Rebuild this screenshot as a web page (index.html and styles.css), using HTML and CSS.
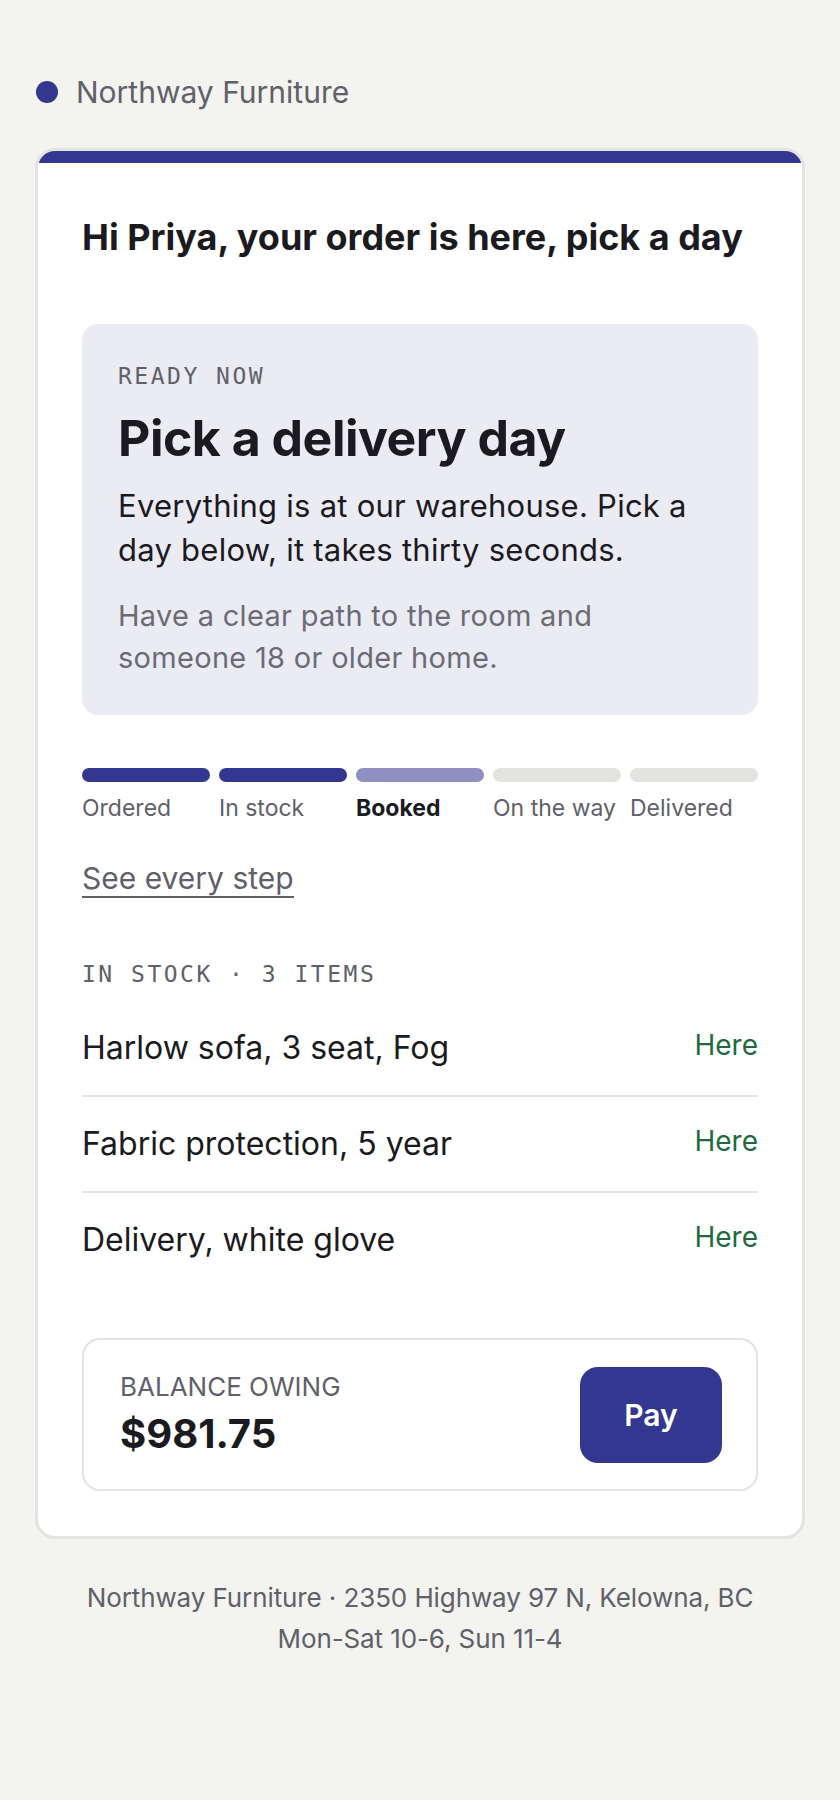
FILE: index.html
```html
<!DOCTYPE html>
<html lang="en">
<head>
    <meta charset="UTF-8">
    <meta name="viewport" content="width=device-width, initial-scale=1.0">
    <title>Northway Furniture - Your order</title>
    <link rel="stylesheet" href="styles.css">
</head>
<body>
    <header class="brand">
        <span class="brand-dot"></span>
        <span class="brand-name">Northway Furniture</span>
    </header>

    <main class="card">
        <div class="card-stripe"></div>
        <div class="card-body">
            <h1>Hi Priya, your order is here, pick a day</h1>

            <section class="ready">
                <p class="eyebrow">READY NOW</p>
                <h2>Pick a delivery day</h2>
                <p class="ready-text">Everything is at our warehouse. Pick a day below, it takes thirty seconds.</p>
                <p class="ready-note">Have a clear path to the room and someone 18 or older home.</p>
            </section>

            <ol class="steps">
                <li class="step done"><span class="bar"></span><span class="label">Ordered</span></li>
                <li class="step done"><span class="bar"></span><span class="label">In stock</span></li>
                <li class="step current"><span class="bar"></span><span class="label">Booked</span></li>
                <li class="step"><span class="bar"></span><span class="label">On the way</span></li>
                <li class="step"><span class="bar"></span><span class="label">Delivered</span></li>
            </ol>

            <a class="steps-link" href="#">See every step</a>

            <p class="eyebrow items-title">IN STOCK · 3 ITEMS</p>
            <ul class="items">
                <li class="item"><span class="item-name">Harlow sofa, 3 seat, Fog</span><span class="item-status">Here</span></li>
                <li class="item"><span class="item-name">Fabric protection, 5 year</span><span class="item-status">Here</span></li>
                <li class="item"><span class="item-name">Delivery, white glove</span><span class="item-status">Here</span></li>
            </ul>

            <div class="balance">
                <div class="balance-info">
                    <span class="balance-label">BALANCE OWING</span>
                    <span class="balance-amount">$981.75</span>
                </div>
                <button class="pay-btn">Pay</button>
            </div>
        </div>
    </main>

    <footer class="footer">
        <p>Northway Furniture · 2350 Highway 97 N, Kelowna, BC</p>
        <p>Mon-Sat 10-6, Sun 11-4</p>
    </footer>
</body>
</html>
```

FILE: styles.css
```css
body {
    margin: 0;
    padding: 72px 35px 80px;
    background-color: #f3f3ef;
    font-family: Inter, "Noto Sans", sans-serif;
    color: #1a1a1f;
}
p, h1, h2, ol, ul {
    margin: 0;
    padding: 0;
}

/* Brand row */
.brand {
    display: flex;
    align-items: center;
    gap: 18px;
    padding-left: 1px;
    height: 40px;
}
.brand-dot {
    width: 22px;
    height: 22px;
    border-radius: 50%;
    background-color: #34378f;
}
.brand-name {
    font-size: 30px;
    line-height: 40px;
    color: #5f606a;
}

/* Card */
.card {
    display: block;
    margin-top: 36px;
    background-color: #ffffff;
    border: 3px solid #e3e3df;
    border-radius: 20px;
    overflow: hidden;
}
.card-stripe {
    height: 12px;
    background-color: #34378f;
}
.card-body {
    padding: 52px 44px 45px;
}
h1 {
    font-size: 36px;
    line-height: 44px;
    font-weight: 700;
    white-space: nowrap;
}

/* Ready panel */
.ready {
    margin-top: 65px;
    padding: 38px 36px 36px;
    background-color: #ebebf4;
    border-radius: 16px;
}
.eyebrow {
    font-family: "DejaVu Sans Mono", "Liberation Mono", monospace;
    font-size: 23px;
    line-height: 28px;
    letter-spacing: 2.5px;
    color: #5f606a;
}
h2 {
    margin-top: 18px;
    font-size: 50px;
    line-height: 60px;
    font-weight: 700;
    letter-spacing: -0.01em;
}
.ready-text {
    margin-top: 16px;
    max-width: 596px;
    font-size: 31px;
    line-height: 44px;
    letter-spacing: 0.25px;
}
.ready-note {
    margin-top: 23px;
    max-width: 550px;
    font-size: 29px;
    line-height: 42px;
    letter-spacing: 0.3px;
    color: #6b6b76;
}

/* Progress steps */
.steps {
    list-style: none;
    margin-top: 53px;
    display: grid;
    grid-template-columns: repeat(5, 1fr);
    column-gap: 9px;
}
.step {
    display: flex;
    flex-direction: column;
    gap: 11px;
}
.bar {
    height: 14px;
    border-radius: 7px;
    background-color: #e3e3df;
}
.step.done .bar {
    background-color: #34378f;
}
.step.current .bar {
    background-color: #8f8fc1;
}
.label {
    font-size: 23px;
    line-height: 30px;
    color: #5f606a;
    white-space: nowrap;
}
.step.current .label {
    color: #1a1a1f;
    font-weight: 700;
}

.steps-link {
    display: inline-block;
    margin-top: 37px;
    font-size: 30px;
    line-height: 36px;
    color: #5f606a;
    text-decoration: none;
    border-bottom: 2px solid #5f606a;
}

/* Items */
.items-title {
    margin-top: 62px;
}
.items {
    list-style: none;
    margin-top: 13px;
}
.item {
    display: flex;
    justify-content: space-between;
    align-items: flex-start;
    padding: 29px 0;
}
.item + .item {
    border-top: 2px solid #e3e3df;
}
.item-name {
    font-size: 32px;
    line-height: 36px;
}
.item-status {
    font-size: 28px;
    line-height: 30px;
    color: #1f6b40;
}

/* Balance */
.balance {
    margin-top: 51px;
    display: flex;
    justify-content: space-between;
    align-items: center;
    padding: 27px 34px 26px 36px;
    border: 2px solid #e3e3df;
    border-radius: 18px;
}
.balance-info {
    display: flex;
    flex-direction: column;
    gap: 9px;
}
.balance-label {
    font-size: 26px;
    line-height: 28px;
    color: #5f606a;
}
.balance-amount {
    font-size: 40px;
    line-height: 48px;
    font-weight: 700;
}
.pay-btn {
    width: 142px;
    height: 96px;
    border: none;
    border-radius: 18px;
    background-color: #34378f;
    color: #ffffff;
    font-family: inherit;
    font-size: 30px;
    font-weight: 600;
    cursor: pointer;
}

/* Footer */
.footer {
    margin-top: 38px;
    text-align: center;
    font-size: 26px;
    line-height: 41px;
    letter-spacing: -0.1px;
    color: #5f606a;
}
```
